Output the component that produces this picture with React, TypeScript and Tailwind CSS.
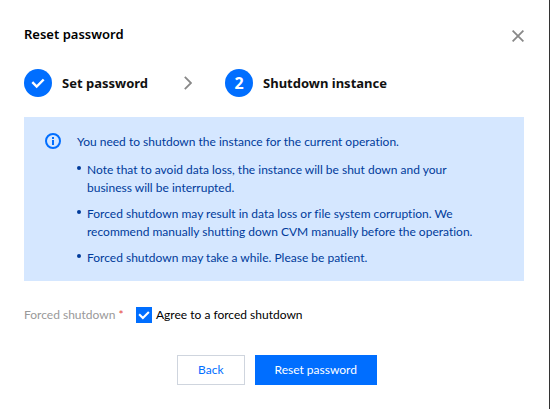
import { useState } from "react";

const notes = [
  "Note that to avoid data loss, the instance will be shut down and your business will be interrupted.",
  "Forced shutdown may result in data loss or file system corruption. We recommend manually shutting down CVM manually before the operation.",
  "Forced shutdown may take a while. Please be patient.",
];

function CheckMark({ className }: { className: string }) {
  return (
    <svg viewBox="0 0 16 16" fill="none" stroke="currentColor" strokeWidth="2.8" className={className} aria-hidden="true">
      <path d="M1.5 7 L6.5 12 L14.5 4" />
    </svg>
  );
}

export default function App() {
  const [agreed, setAgreed] = useState(true);

  return (
    <div className="min-h-screen border-r border-[#333] bg-white py-6 pl-6 pr-[25px] font-['Lato','Noto_Sans',sans-serif] text-xs leading-[18px] text-black [font-variant-ligatures:none]">
      <header className="flex h-5 items-center justify-between">
        <h1 className="font-['Noto_Sans',sans-serif] text-[13px] font-semibold leading-5">Reset password</h1>
        <button type="button" aria-label="Close" className="mt-1 text-[#888]">
          <svg viewBox="0 0 12 12" className="size-3" fill="none" stroke="currentColor" strokeWidth="1.8">
            <path d="M0.6 0.6 L11.4 11.4 M11.4 0.6 L0.6 11.4" />
          </svg>
        </button>
      </header>

      <ol className="mt-[25px] flex items-center font-['Noto_Sans',sans-serif] text-[13px] font-bold leading-5 text-[#111]">
        <li className="flex items-center gap-2.5">
          <span className="flex size-7 items-center justify-center rounded-full bg-[#006eff] text-white">
            <CheckMark className="size-3.5" />
          </span>
          Set password
        </li>
        <li aria-hidden="true" className="ml-9 mr-[33px] text-[#888]">
          <svg viewBox="0 0 8 14" className="h-3.5 w-2" fill="none" stroke="currentColor" strokeWidth="1.8">
            <path d="M0.8 0.8 L7 7 L0.8 13.2" />
          </svg>
        </li>
        <li className="flex items-center gap-2.5">
          <span className="flex size-7 items-center justify-center rounded-full bg-[#006eff] text-base font-bold text-white">2</span>
          Shutdown instance
        </li>
      </ol>

      <section className="mt-5 flex items-start gap-4 bg-[#d5e7ff] pb-3.5 pl-[21px] pr-10 pt-4 text-[#003b9b]">
        <svg viewBox="0 0 16 16" className="size-4 shrink-0 text-[#006eff]" fill="none" stroke="currentColor" strokeWidth="2" aria-hidden="true">
          <circle cx="8" cy="8" r="7" />
          <path d="M8 4 V6 M8 7 V12" />
        </svg>
        <div>
          <p>You need to shutdown the instance for the current operation.</p>
          <ul className="mt-2.5 space-y-2">
            {notes.map((note) => (
              <li key={note} className="flex gap-1.5">
                <span className="mt-[5px] size-1 shrink-0 rounded-full bg-current" />
                <span>{note}</span>
              </li>
            ))}
          </ul>
        </div>
      </section>

      <div className="mt-[25px] flex items-center">
        <label htmlFor="forced" className="w-28 text-[#999]">
          Forced shutdown <span className="text-[#e54545]">*</span>
        </label>
        <label className="flex items-center gap-1">
          <span className="relative flex size-4">
            <input
              id="forced"
              type="checkbox"
              checked={agreed}
              onChange={(e) => setAgreed(e.target.checked)}
              className="size-4 appearance-none border border-[#006eff] checked:bg-[#006eff]"
            />
            {agreed && <CheckMark className="pointer-events-none absolute inset-0.5 size-3 text-white" />}
          </span>
          Agree to a forced shutdown
        </label>
      </div>

      <footer className="mt-[31px] flex justify-center gap-2.5 pl-1.5">
        <button type="button" className="h-[30px] border border-[#cfd5de] px-5 text-[#006eff]">Back</button>
        <button type="button" className="h-[30px] bg-[#006eff] px-5 text-white">Reset password</button>
      </footer>
    </div>
  );
}
